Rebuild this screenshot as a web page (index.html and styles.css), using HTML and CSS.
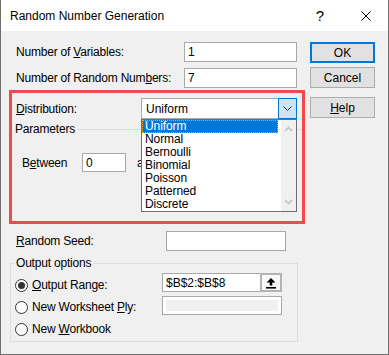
FILE: index.html
```html
<!DOCTYPE html>
<html>
<head>
    <title>Random Number Generation</title>
    <link rel="stylesheet" href="styles.css">
</head>
<body>
    <div class="dialog">
        <div class="titlebar">
            <span class="title">Random Number Generation</span>
            <span class="title-help">?</span>
            <span class="title-close">
                <svg width="10" height="10" viewBox="0 0 10 10"><path d="M0.5 0.5 L9.5 9.5 M9.5 0.5 L0.5 9.5" stroke="#000" stroke-width="1" fill="none"/></svg>
            </span>
        </div>

        <div class="body">
            <div class="main">
                <div class="row row-vars">
                    <span class="label label-top">Number of <u>V</u>ariables:</span>
                    <span class="textbox tb-top">1</span>
                </div>
                <div class="row row-nums">
                    <span class="label label-top">Number of Random Num<u>b</u>ers:</span>
                    <span class="textbox tb-top">7</span>
                </div>

                <div class="highlight">
                    <div class="dist-row">
                        <span class="label label-dist"><u>D</u>istribution:</span>
                        <div class="combo">
                            <span class="combo-value">Uniform</span>
                            <span class="combo-btn">
                                <svg width="9" height="5" viewBox="0 0 9 5"><path d="M0.5 0.5 L4.5 4.5 L8.5 0.5" stroke="#333" stroke-width="1" fill="none"/></svg>
                            </span>
                            <div class="combo-list">
                                <div class="list-items">
                                    <div class="item selected">Uniform</div>
                                    <div class="item">Normal</div>
                                    <div class="item">Bernoulli</div>
                                    <div class="item">Binomial</div>
                                    <div class="item">Poisson</div>
                                    <div class="item">Patterned</div>
                                    <div class="item">Discrete</div>
                                </div>
                                <div class="scrollbar">
                                    <svg width="9" height="6" viewBox="0 0 9 6"><path d="M1 5 L4.5 1.5 L8 5" stroke="#c2c2c2" stroke-width="1.6" fill="none"/></svg>
                                    <svg width="9" height="6" viewBox="0 0 9 6"><path d="M1 1 L4.5 4.5 L8 1" stroke="#c2c2c2" stroke-width="1.6" fill="none"/></svg>
                                </div>
                            </div>
                        </div>
                    </div>

                    <div class="group-head">
                        <span class="group-title">Parameters</span>
                        <span class="group-line"></span>
                    </div>

                    <div class="between-row">
                        <span class="label label-between">B<u>e</u>tween</span>
                        <span class="textbox tb-between">0</span>
                        <span class="and">and</span>
                    </div>
                </div>

                <div class="row row-seed">
                    <span class="label label-seed"><u>R</u>andom Seed:</span>
                    <span class="textbox tb-wide"></span>
                </div>

                <fieldset class="output">
                    <legend>Output options</legend>
                    <div class="radio-row">
                        <span class="radio checked"></span>
                        <span class="radio-label"><u>O</u>utput Range:</span>
                        <span class="textbox tb-wide tb-range">
                            <span class="range-value">$B$2:$B$8</span>
                            <span class="range-btn">
                                <svg width="12" height="12" viewBox="0 0 12 12"><path d="M6 1 L10.5 5.5 L7.3 5.5 L7.3 8.5 L4.7 8.5 L4.7 5.5 L1.5 5.5 Z" fill="#000"/><rect x="1" y="10" width="10" height="1.6" fill="#000"/></svg>
                            </span>
                        </span>
                    </div>
                    <div class="radio-row">
                        <span class="radio"></span>
                        <span class="radio-label">New Worksheet <u>P</u>ly:</span>
                        <span class="textbox tb-wide tb-disabled"><span class="disabled-fill"></span></span>
                    </div>
                    <div class="radio-row">
                        <span class="radio"></span>
                        <span class="radio-label">New <u>W</u>orkbook</span>
                    </div>
                </fieldset>
            </div>

            <div class="side">
                <div class="button default">OK</div>
                <div class="button">Cancel</div>
                <div class="button help"><u>H</u>elp</div>
            </div>
        </div>
    </div>
</body>
</html>
```

FILE: styles.css
```css
* {
    box-sizing: border-box;
}

body {
    margin: 0;
    font-family: "Liberation Sans", Arial, sans-serif;
    font-size: 12px;
    line-height: 14px;
    color: #000;
    background: #fff;
}

u {
    text-underline-offset: 1px;
}

.dialog {
    width: 389px;
    height: 355px;
    background: #f0f0f0;
    border: 1px solid #6f6f6f;
    border-top: none;
}

.titlebar {
    height: 31px;
    background: #fff;
    display: flex;
    align-items: center;
    padding-left: 9px;
}

.title {
    flex: 1;
}

.title-help {
    width: 46px;
    text-align: center;
    font-size: 15px;
}

.title-close {
    width: 45px;
    display: flex;
    justify-content: center;
}

.body {
    display: flex;
}

.main {
    width: 296px;
    margin-left: 8px;
}

.side {
    width: 65px;
    margin-left: 5px;
}

.label {
    letter-spacing: -0.2px;
    white-space: nowrap;
}

.row {
    display: flex;
    align-items: center;
    height: 20px;
}

.row-vars {
    margin-top: 11px;
}

.row-nums {
    margin-top: 6px;
}

.label-top {
    width: 175px;
    padding-left: 7px;
}

.textbox {
    display: flex;
    align-items: center;
    height: 20px;
    background: #fff;
    border: 1px solid #a9a9a9;
    padding-left: 3px;
}

.tb-top {
    width: 113px;
}

/* red annotation box */
.highlight {
    margin-top: 2px;
    height: 134px;
    border: 3px solid #f6484a;
}

.dist-row {
    display: flex;
    align-items: center;
    margin-top: 5px;
    height: 21px;
}

.label-dist {
    width: 129px;
    padding-left: 4px;
}

.combo {
    position: relative;
    display: flex;
    width: 156px;
    height: 21px;
}

.combo-value {
    flex: 1;
    display: flex;
    align-items: center;
    padding-left: 4px;
    background: #fff;
    border: 1px solid #a9a9a9;
    border-right: none;
}

.combo-btn {
    width: 19px;
    display: flex;
    align-items: center;
    justify-content: center;
    background: #cce4f7;
    border: 1px solid #0078d7;
}

.combo-list {
    position: absolute;
    top: 21px;
    left: 0;
    width: 156px;
    height: 93px;
    z-index: 2;
    display: flex;
    background: #fff;
    border: 1px solid #6e6e6e;
}

.list-items {
    flex: 1;
    padding-right: 3px;
}

.item {
    height: 13px;
    line-height: 13px;
    padding-left: 3px;
    letter-spacing: -0.1px;
}

.item.selected {
    background: #0078d7;
    color: #fff;
    outline: 1px dotted #f7a530;
    outline-offset: -1px;
}

.scrollbar {
    width: 15px;
    background: #f0f0f0;
    display: flex;
    flex-direction: column;
    justify-content: space-between;
    align-items: center;
    padding: 6px 0 6px;
}

.group-head {
    display: flex;
    align-items: center;
    margin-top: 3px;
    height: 14px;
}

.group-title {
    padding-left: 3px;
    padding-right: 3px;
    letter-spacing: -0.2px;
}

.group-line {
    flex: 1;
    border-top: 1px solid #dcdcdc;
}

.between-row {
    display: flex;
    align-items: center;
    margin-top: 17px;
    height: 19px;
}

.label-between {
    width: 70px;
    padding-left: 10px;
}

.tb-between {
    width: 44px;
    height: 19px;
}

.and {
    margin-left: 11px;
}

.row-seed {
    margin-top: 7px;
}

.label-seed {
    width: 157px;
    padding-left: 7px;
}

.tb-wide {
    width: 120px;
}

/* output options group */
.output {
    margin: 5px 0 0 1px;
    width: 288px;
    height: 86px;
    padding: 4px 0 0;
    border: 1px solid #dcdcdc;
}

.output legend {
    margin-left: 3px;
    padding: 0 2px;
    letter-spacing: -0.2px;
}

.radio-row {
    display: flex;
    align-items: center;
    height: 22px;
}

.radio {
    width: 13px;
    height: 13px;
    margin-left: 4px;
    border: 1px solid #333;
    border-radius: 50%;
    background: #fff;
    display: flex;
    align-items: center;
    justify-content: center;
}

.radio.checked::after {
    content: "";
    width: 7px;
    height: 7px;
    border-radius: 50%;
    background: #333;
}

.radio-label {
    width: 134px;
    padding-left: 4px;
    letter-spacing: -0.2px;
    white-space: nowrap;
}

.tb-range {
    align-self: flex-start;
    margin-top: -1px;
    height: 19px;
    padding-right: 0;
}

.range-value {
    flex: 1;
}

.range-btn {
    width: 22px;
    height: 19px;
    margin: -1px -1px -1px 0;
    border: 2px solid #b3b3b3;
    background: #fafafa;
    display: flex;
    align-items: center;
    justify-content: center;
}

.tb-disabled {
    align-self: flex-start;
    margin-top: 0;
    height: 19px;
    padding: 3px;
}

.disabled-fill {
    flex: 1;
    height: 11px;
    background: #f0f0f0;
}

/* dialog buttons */
.button {
    height: 21px;
    display: flex;
    align-items: center;
    justify-content: center;
    background: #e1e1e1;
    border: 1px solid #adadad;
}

.button.default {
    margin-top: 11px;
    border: 2px solid #0078d7;
}

.button + .button {
    margin-top: 4px;
}

.button.help {
    margin-top: 9px;
}
```
